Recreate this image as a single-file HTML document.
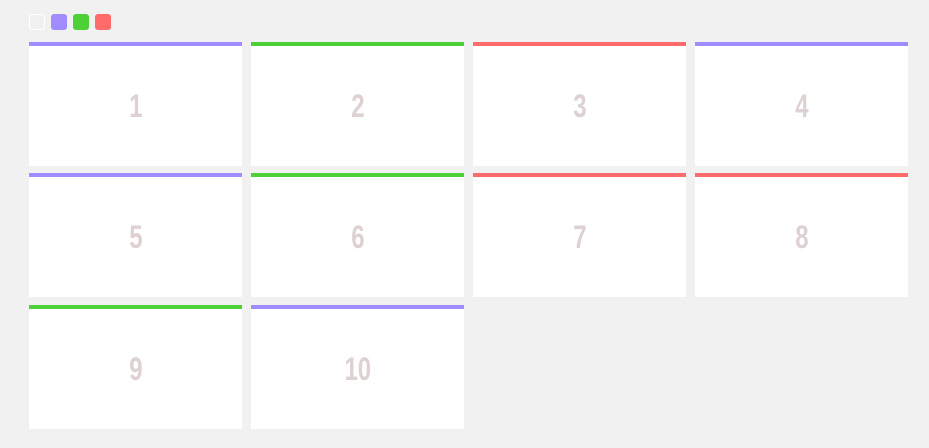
<!DOCTYPE html>
<html><head><style>
body{margin:0;background:#f1f1f1;width:929px;height:448px;overflow:hidden;position:relative;font-family:"Liberation Sans Narrow","Liberation Sans",sans-serif}
.sw{position:absolute;top:14px;width:16px;height:16px;border-radius:3px;box-sizing:border-box}
.c{position:absolute;width:213px;height:124px;background:#fff;box-sizing:border-box;border-top:4px solid;display:flex;align-items:center;justify-content:center;font-weight:bold;font-size:32px;color:#ddd1d1}
.c span{display:inline-block;transform:scaleX(.75)}
.p{border-color:#a08bff}.g{border-color:#4cd137}.r{border-color:#ff6b6b}
</style></head><body>
<div class="sw" style="left:29px;border:1px solid #fff"></div>
<div class="sw" style="left:51px;background:#a08bff"></div>
<div class="sw" style="left:73px;background:#4cd137"></div>
<div class="sw" style="left:95px;background:#ff6b6b"></div>
<div class="c p" style="left:29px;top:42px"><span>1</span></div>
<div class="c g" style="left:251px;top:42px"><span>2</span></div>
<div class="c r" style="left:473px;top:42px"><span>3</span></div>
<div class="c p" style="left:695px;top:42px"><span>4</span></div>
<div class="c p" style="left:29px;top:173px"><span>5</span></div>
<div class="c g" style="left:251px;top:173px"><span>6</span></div>
<div class="c r" style="left:473px;top:173px"><span>7</span></div>
<div class="c r" style="left:695px;top:173px"><span>8</span></div>
<div class="c g" style="left:29px;top:305px"><span>9</span></div>
<div class="c p" style="left:251px;top:305px"><span>10</span></div>
</body></html>
